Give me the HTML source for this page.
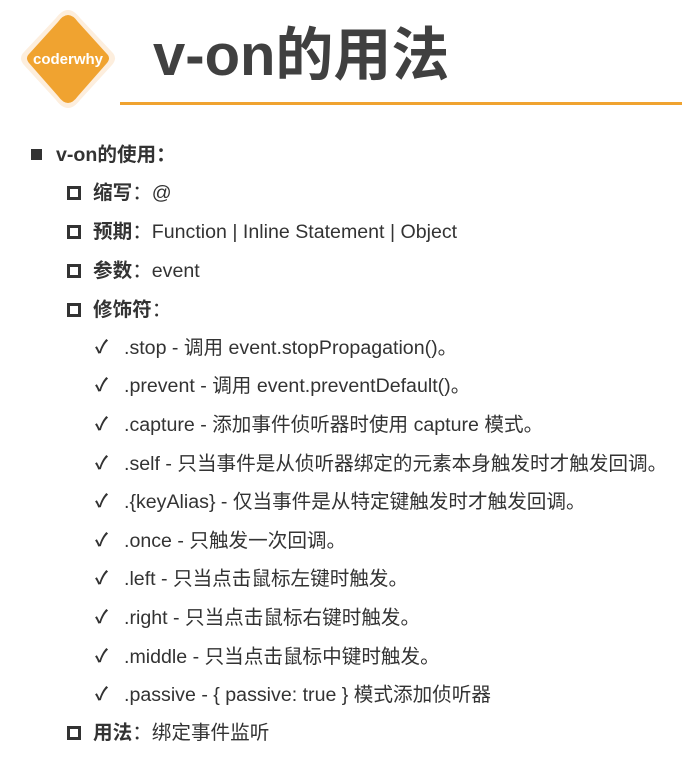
<!DOCTYPE html>
<html><head><meta charset="utf-8"><style>
body{margin:0;width:682px;height:757px;background:#fff;position:relative;overflow:hidden;font-family:"Liberation Sans","Noto Sans CJK SC",sans-serif;color:#333}
.l{position:absolute;white-space:nowrap;font-size:19.6px;line-height:24px}
.b{font-weight:bold}
.sq{position:absolute;width:11px;height:11px;background:#333}
.hs{position:absolute;width:8px;height:8px;border:3px solid #333}
.ck{position:absolute;font-size:18px;line-height:20px;color:#333;font-weight:bold}
</style></head><body>
<svg width="130" height="120" viewBox="0 0 130 120" style="position:absolute;left:0;top:0">
<path d="M68 10 Q74 10 80 18 L112 52 Q118 58 112 65 L80 100 Q74 108 68 108 Q62 108 56 100 L24 65 Q18 58 24 52 L56 18 Q62 10 68 10Z" fill="#fdeedd"/>
<path d="M68 15 Q73 15 78 22 L107 54 Q111 58 107 63 L78 96 Q73 103 68 103 Q63 103 58 96 L29 63 Q25 58 29 54 L58 22 Q63 15 68 15Z" fill="#f0a330"/>
<text x="68" y="64" text-anchor="middle" font-family="Liberation Sans" font-weight="bold" font-size="15" fill="#fff">coderwhy</text>
</svg>
<div class="l b" style="left:153px;top:22px;font-size:58px;line-height:68px;color:#404040">v-on的用法</div>
<div style="position:absolute;left:120px;top:102px;width:562px;height:3px;background:#f0a330"></div>
<div class="sq" style="left:31px;top:149px"></div>
<div class="l b" style="left:56px;top:143px">v-on的使用：</div>
<div class="hs" style="left:67px;top:186px"></div><div class="l" style="left:93px;top:181px"><b>缩写</b>：@</div>
<div class="hs" style="left:67px;top:225px"></div><div class="l" style="left:93px;top:220px"><b>预期</b>：Function | Inline Statement | Object</div>
<div class="hs" style="left:67px;top:264px"></div><div class="l" style="left:93px;top:259px"><b>参数</b>：event</div>
<div class="hs" style="left:67px;top:303px"></div><div class="l" style="left:93px;top:298px"><b>修饰符</b>：</div>
<div class="ck" style="left:95px;top:337px">✓</div><div class="l" style="left:124px;top:336px">.stop - 调用 event.stopPropagation()。</div>
<div class="ck" style="left:95px;top:375px">✓</div><div class="l" style="left:124px;top:374px">.prevent - 调用 event.preventDefault()。</div>
<div class="ck" style="left:95px;top:414px">✓</div><div class="l" style="left:124px;top:413px">.capture - 添加事件侦听器时使用 capture 模式。</div>
<div class="ck" style="left:95px;top:453px">✓</div><div class="l" style="left:124px;top:452px">.self - 只当事件是从侦听器绑定的元素本身触发时才触发回调。</div>
<div class="ck" style="left:95px;top:491px">✓</div><div class="l" style="left:124px;top:490px">.{keyAlias} - 仅当事件是从特定键触发时才触发回调。</div>
<div class="ck" style="left:95px;top:530px">✓</div><div class="l" style="left:124px;top:529px">.once - 只触发一次回调。</div>
<div class="ck" style="left:95px;top:568px">✓</div><div class="l" style="left:124px;top:567px">.left - 只当点击鼠标左键时触发。</div>
<div class="ck" style="left:95px;top:607px">✓</div><div class="l" style="left:124px;top:606px">.right - 只当点击鼠标右键时触发。</div>
<div class="ck" style="left:95px;top:646px">✓</div><div class="l" style="left:124px;top:645px">.middle - 只当点击鼠标中键时触发。</div>
<div class="ck" style="left:95px;top:684px">✓</div><div class="l" style="left:124px;top:683px">.passive - { passive: true } 模式添加侦听器</div>
<div class="hs" style="left:67px;top:726px"></div><div class="l" style="left:93px;top:721px"><b>用法</b>：绑定事件监听</div>
</body></html>
